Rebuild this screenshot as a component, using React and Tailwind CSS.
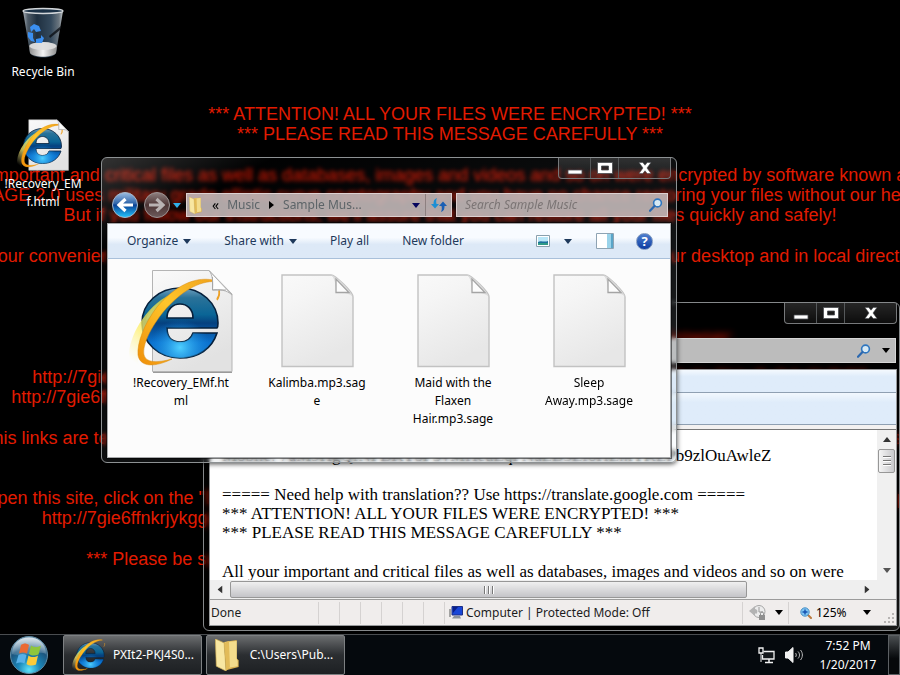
import React, { useId } from 'react';
import clsx from 'clsx';

const wallpaperText = [
    {
        gap: 'mt-0',
        lines: [
            '*** ATTENTION! ALL YOUR FILES WERE ENCRYPTED! ***',
            '*** PLEASE READ THIS MESSAGE CAREFULLY ***'
        ]
    },
    {
        gap: 'mt-[21px]',
        lines: [
            'All your important and critical files as well as databases, images and videos and so on were encrypted by software known as SAGE!',
            'SAGE 2.0 uses military grade elliptic curve cryptography and you have no chance restoring your files without our help!',
            "But if you follow our instructions, we'll assure that you can restore all your files quickly and safely!"
        ]
    },
    {
        gap: 'mt-[21px]',
        lines: ['For your convenience we have created files with instructions, they were also placed on your desktop and in local directories!']
    },
    {
        gap: 'mt-[61px]',
        lines: ['To get the instructions open any of this temporary links in your browser:']
    },
    {
        gap: 'mt-5',
        lines: [
            'http://7gie6ffnkrjykggd.rzunt3u2.com/login/AWmT8kzHq3vXbN0pR5sLcYd1eFgJ2uKo7iVwZxQ4a9hRtE5',
            'http://7gie6ffnkrjykggd.er29sl.com/login/AWmT8kzHq3vXbN0pR5sLcYd1eFgJ2uKo7iVwZxQ4a9hRtE3mPyB7t'
        ]
    },
    {
        gap: 'mt-[21px]',
        lines: ["This links are temporary and will stop working after a limited time, so if you can't open them, please use TOR Browser"]
    },
    {
        gap: 'mt-10',
        lines: [
            'To open this site, click on the "Download Tor" button on the page, run it again and then open the link of your personal page',
            'http://7gie6ffnkrjykggd.onion/login/AWmT8kzHq3vXbN0pR5sLcYd1eFgJ2uKo7iVwZxQ4a9hRtE3mPy7'
        ]
    },
    {
        gap: 'mt-[21px]',
        lines: ['*** Please be sure to copy this instruction text and links to your notepad, do not lose any ***']
    }
];

const files = [
    { id: 1, type: 'html', label: ['!Recovery_EMf.ht', 'ml'] },
    { id: 2, type: 'blank', label: ['Kalimba.mp3.sag', 'e'] },
    { id: 3, type: 'blank', label: ['Maid with the', 'Flaxen', 'Hair.mp3.sage'] },
    { id: 4, type: 'blank', label: ['Sleep', 'Away.mp3.sage'] }
];

function Caret({ className }) {
    return (
        <svg viewBox="0 0 8 5" className={clsx('h-[5px] w-2 shrink-0', className)} fill="currentColor">
            <path d="M0 0h8L4 5z" />
        </svg>
    );
}

function IeShape() {
    const id = useId();
    return (
        <>
            <defs>
                <linearGradient id={`${id}e`} x1="0" y1="0" x2="0" y2="1">
                    <stop offset="0" stopColor="#6f9fbd" />
                    <stop offset="0.14" stopColor="#2a7299" />
                    <stop offset="0.38" stopColor="#0a6596" />
                    <stop offset="0.5" stopColor="#05417f" />
                    <stop offset="0.78" stopColor="#0b72cf" />
                    <stop offset="1" stopColor="#1273c9" />
                </linearGradient>
                <radialGradient id={`${id}g`} cx="0.5" cy="0.85" r="0.4">
                    <stop offset="0" stopColor="#4fd0ff" />
                    <stop offset="1" stopColor="#1690e8" stopOpacity="0" />
                </radialGradient>
                <linearGradient id={`${id}r`} x1="1" y1="0" x2="0" y2="1">
                    <stop offset="0" stopColor="#f0a41c" />
                    <stop offset="0.45" stopColor="#ffc62b" />
                    <stop offset="1" stopColor="#ef8f0a" />
                </linearGradient>
                <linearGradient id={`${id}y`} x1="0.7" y1="0" x2="0.2" y2="1">
                    <stop offset="0" stopColor="#d4d23a" stopOpacity="0.8" />
                    <stop offset="0.6" stopColor="#fff06a" stopOpacity="0.75" />
                    <stop offset="1" stopColor="#fff6a0" stopOpacity="0" />
                </linearGradient>
            </defs>
            {['e', 'g'].map((fill) => (
                <path
                    key={fill}
                    d="M84 59H34C34 68 39 73 47 73C54 73 58 70 60 64H84C79 80 65 89 47 89C26 89 9 74 9 54C9 34 26 19 47 19C68 19 85 34 85 54C85 56 85 58 84 59ZM34 49H60C60 40 54 35 47 35C40 35 34 40 34 49Z"
                    fillRule="evenodd"
                    fill={`url(#${id}${fill})`}
                    stroke={fill === 'e' ? '#06203c' : 'none'}
                    strokeWidth="1.6"
                />
            ))}
            <path d="M40 26C24 32 14 42 13 52C18 47 24 40 32 36Z" fill="#cfe6f2" opacity="0.3" />
            <path d="M42 23C16 34-2 62-4 84C-4 94 0 98 6 96C2 84 12 56 30 36Z" fill={`url(#${id}y)`} />
            <path
                d="M80 11C60 7 40 19 24 38C11 55 4 74 5 86C7 99 23 98 39 90C24 94 13 94 11 86C9 76 18 58 31 42C45 26 62 13 80 12.500Z"
                fill={`url(#${id}r)`}
                stroke="#d98a10"
                strokeWidth="0.5"
            />
            <path d="M86 20C87 24 86 27 84 30" fill="none" stroke="#eda024" strokeWidth="1.500" />
        </>
    );
}

function HtmlFileIcon({ className }) {
    const id = useId();
    return (
        <svg viewBox="-4 0 104 104" className={className}>
            <defs>
                <linearGradient id={id} x1="0" y1="0" x2="0.4" y2="1">
                    <stop offset="0" stopColor="#fafafa" />
                    <stop offset="1" stopColor="#e2e2e2" />
                </linearGradient>
            </defs>
            <path d="M19.500 1.500H76L99 25V102.500H19.500Z" fill={`url(#${id})`} stroke="#b4b4b4" />
            <path d="M20 103.500H99" stroke="#9a9a9a" />
            <IeShape />
            <path d="M76 1.500C80 6 80 14 79.500 21C86 20 94 21 99 26Z" fill="#fdfdfd" stroke="#b0b0b0" />
            <path d="M79.500 8V21H93" fill="none" stroke="#a6a6a6" />
            <path d="M86 22C87 25 86 28 84 31" fill="none" stroke="#eda024" strokeWidth="1.500" />
        </svg>
    );
}

function BlankFileIcon({ className }) {
    const id = useId();
    return (
        <svg viewBox="0 0 73 94" className={className}>
            <defs>
                <linearGradient id={id} x1="0" y1="0" x2="0.400" y2="1">
                    <stop offset="0" stopColor="#f9f9f9" />
                    <stop offset="0.3" stopColor="#f5f5f5" />
                    <stop offset="1" stopColor="#e7e7e7" />
                </linearGradient>
            </defs>
            <path
                d="M1 1H50C54 1 72 18 72 23V92.500H1Z"
                fill={`url(#${id})`}
                stroke="#c2c2c2"
                strokeWidth="1.400"
            />
            <path d="M50 1C53 3 55 9 55 18.500C63 18 70 20 72 23C71 18 56 2 50 1Z" fill="#dcdcdc" />
            <path d="M55 5V18.500H68Z" fill="#fcfcfc" stroke="#a4a4a4" strokeWidth="1.300" />
        </svg>
    );
}

function FolderIcon({ className }) {
    return (
        <svg viewBox="0 0 24 33" className={className}>
            <path d="M9 3L22 1V20L24 22V29L12 32Z" fill="#d9b04e" />
            <path d="M10 3L22 2V20L23 23V28L12 30Z" fill="#f3dc8c" />
            <path d="M0 0L9 4L11 33L1 28Z" fill="#f8e7a2" />
            <path d="M9 4L14 2L15 29L11 33Z" fill="#e2bb58" />
            <path d="M0 0L9 4L11 33L1 28Z" fill="none" stroke="#d6b457" strokeWidth="0.7" />
        </svg>
    );
}

function RecycleBinIcon() {
    return (
        <svg viewBox="0 0 44 52" className="h-[52px] w-11">
            <defs>
                <linearGradient id="binBody" x1="0" x2="1">
                    <stop offset="0" stopColor="#a9b1b8" />
                    <stop offset="0.12" stopColor="#4d5a66" />
                    <stop offset="0.35" stopColor="#1f3040" />
                    <stop offset="0.7" stopColor="#34495c" />
                    <stop offset="0.9" stopColor="#6c7780" />
                    <stop offset="1" stopColor="#c4c9cc" />
                </linearGradient>
                <linearGradient id="binBase" x1="0" x2="1">
                    <stop offset="0" stopColor="#8c8c8c" />
                    <stop offset="0.5" stopColor="#f4f4f4" />
                    <stop offset="1" stopColor="#8c8c8c" />
                </linearGradient>
            </defs>
            <path d="M2 4L9 46C12 52 32 52 35 46L42 4Z" fill="url(#binBody)" />
            <path d="M8 39C12 34 31 34 36 39L35 46C31 51 13 51 9 46Z" fill="url(#binBase)" />
            <ellipse cx="22" cy="39" rx="13.500" ry="4" fill="#dedede" opacity="0.9" />
            <ellipse cx="22" cy="4" rx="20" ry="2.500" fill="#1b3146" stroke="#d3d7da" strokeWidth="1.300" />
            <path d="M40 19L28 29L29 31L39 23Z" fill="#0b0f14" opacity="0.8" />
            <g fill="#3b8ff0">
                <path d="M9 20L13 17L18 19L20 24L15 25L13 22L10 25Z" />
                <path d="M7 25L12 26L12 31L14 35L10 34L7 30Z" />
                <path d="M15 32L20 31V28L23 31L21 36L15 36Z" />
            </g>
        </svg>
    );
}

function StartOrb() {
    return (
        <svg viewBox="0 0 40 40" className="size-10">
            <defs>
                <radialGradient id="orb" cx="0.5" cy="0.9" r="0.85">
                    <stop offset="0" stopColor="#5fe4fb" />
                    <stop offset="0.35" stopColor="#1b87b9" />
                    <stop offset="0.7" stopColor="#1c567f" />
                    <stop offset="1" stopColor="#7fa3ba" />
                </radialGradient>
                <linearGradient id="orbShine" x1="0" y1="0" x2="0" y2="1">
                    <stop offset="0" stopColor="#fff" stopOpacity="0.7" />
                    <stop offset="1" stopColor="#fff" stopOpacity="0.12" />
                </linearGradient>
            </defs>
            <circle cx="20" cy="20" r="18.500" fill="url(#orb)" stroke="#5f8ba4" />
            <path d="M3 19C3 8 11 2.500 20 2.500S37 8 37 19C28 15 13 23 3 19Z" fill="url(#orbShine)" />
            <path d="M12 10C15 8 17 8 20 10L18 18.500C15 17 13 17 10 18.500Z" fill="#ea6a34" />
            <path d="M22 10.500C25 12.500 28 12.500 32 10.500L29.500 19.500C26 21 23 21 20 19Z" fill="#8fc63c" />
            <path d="M9.500 20C12 18.500 15 18.500 17.500 20L15.500 28.500C13 27 10 27 7 28.500Z" fill="#58b0e8" />
            <path d="M19.500 20.500C22 22.500 26 22.500 29 20.500L27 29.500C24 31 20 31 17.500 29Z" fill="#fccb3a" />
        </svg>
    );
}

function SearchIcon({ className }) {
    return (
        <svg viewBox="0 0 14 14" className={className} fill="none">
            <circle cx="8.500" cy="5" r="3.900" stroke="#2f76bf" strokeWidth="1.600" fill="#d7e9f4" />
            <path d="M5.500 8L1 12.800" stroke="#2b68b0" strokeWidth="2.200" strokeLinecap="round" />
        </svg>
    );
}

function CaptionButtons() {
    const base = 'flex h-5 items-center justify-center';
    return (
        <div className="flex shrink-0 divide-x divide-[#55585a] rounded-b-[4px] border border-t-0 border-[#77797b] bg-linear-to-b from-white/15 to-white/5">
            <button aria-label="Minimize" className={clsx(base, 'w-8')}>
                <svg viewBox="0 0 16 20" className="h-5 w-4">
                    <path d="M1 12h14v4H1z" fill="#fff" stroke="#4a4d50" strokeWidth="0.8" />
                </svg>
            </button>
            <button aria-label="Maximize" className={clsx(base, 'w-7')}>
                <svg viewBox="0 0 16 12" className="h-3 w-4">
                    <path d="M0.500 0.500h15v11h-15zM4.500 4h7v4h-7z" fillRule="evenodd" fill="#fff" stroke="#4a4d50" strokeWidth="0.8" />
                </svg>
            </button>
            <button aria-label="Close" className={clsx(base, 'w-[51px]')}>
                <svg viewBox="0 0 14 12" className="h-3 w-[14px]">
                    <path d="M1 0.500h3.800L7 3.200 9.200 0.500H13L9 6l4 5.500H9.200L7 8.800 4.800 11.500H1L5 6z" fill="#fff" stroke="#4a4d50" strokeWidth="0.600" />
                </svg>
            </button>
        </div>
    );
}

function ToolbarButton({ children, caret, className }) {
    return (
        <button className={clsx('flex items-center gap-[5px] whitespace-nowrap text-[#1e395b]', className)}>
            {children}
            {caret && <Caret />}
        </button>
    );
}

function ExplorerWindow() {
    return (
        <section
            aria-label="Sample Music"
            className="absolute top-[157px] left-[101px] flex h-[306px] w-[576px] flex-col rounded-md border border-[#8d9193] bg-linear-to-br from-white/20 via-[#0a1014]/10 via-15% to-sky-100/15 px-[5px] pb-1 shadow-[0_1px_5px_rgba(0,0,0,0.7)] backdrop-blur-[2px]"
        >
            <div className="flex justify-end">
                <CaptionButtons />
            </div>

            {/* Navigation row */}
            <div className="flex flex-1 items-center pt-2 pr-[3px] pl-1">
                <button aria-label="Back" className="shrink-0">
                    <svg viewBox="0 0 28 28" className="size-7">
                        <defs>
                            <linearGradient id="back" x1="0" y1="0" x2="0" y2="1">
                                <stop offset="0" stopColor="#9dbde2" />
                                <stop offset="0.45" stopColor="#2c62a8" />
                                <stop offset="0.5" stopColor="#093f94" />
                                <stop offset="1" stopColor="#24c6ff" />
                            </linearGradient>
                        </defs>
                        <circle cx="14" cy="14" r="12.500" fill="url(#back)" stroke="#a9b7c8" />
                        <path d="M22 14H9M14.500 8L8 14L14.500 20" fill="none" stroke="#fff" strokeWidth="3.200" />
                    </svg>
                </button>
                <button aria-label="Forward" className="ml-1 shrink-0">
                    <svg viewBox="0 0 28 28" className="size-7">
                        <defs>
                            <linearGradient id="forward" x1="0" y1="0" x2="0" y2="1">
                                <stop offset="0" stopColor="#8f8080" />
                                <stop offset="0.5" stopColor="#4d3535" />
                                <stop offset="1" stopColor="#6d5c5c" />
                            </linearGradient>
                        </defs>
                        <circle cx="14" cy="14" r="12.500" fill="url(#forward)" stroke="#9c9494" />
                        <path d="M6 14H19M13.500 8L20 14L13.500 20" fill="none" stroke="#b9b3b3" strokeWidth="3.200" />
                    </svg>
                </button>
                <button aria-label="Recent pages" className="ml-0.5 shrink-0 text-[#2fb0ea]">
                    <Caret />
                </button>
                <div className="ml-[5px] flex h-6 w-[266px] shrink-0 items-center border border-[#ddd0d0] bg-[#c3b9b9]/90 text-[#5d6468]">
                    <FolderIcon className="ml-0.5 h-[17px] w-[13px]" />
                    <button className="ml-[10px] text-sm leading-4 text-black">«</button>
                    <button className="ml-2">Music</button>
                    <svg viewBox="0 0 5 8" className="mx-[9px] h-2 w-[5px]">
                        <path d="M0 0L5 4L0 8z" />
                    </svg>
                    <button>Sample Mus...</button>
                    <button aria-label="Previous locations" className="ml-auto px-[5px] text-[#05055e]">
                        <Caret />
                    </button>
                    <button aria-label="Refresh" className="flex h-full w-[26px] items-center justify-center border-l border-[#8d8080]">
                        <svg viewBox="0 0 16 14" className="h-[14px] w-4" fill="#1d8fd4">
                            <path d="M6 0C3 1 2.500 3 2.500 6H0L4 10.500L8 6H5.500C5 4 5 2 6 0Z" />
                            <path d="M10 14C13 13 13.500 11 13.500 8H16L12 3.500L8 8H10.500C11 10 11 12 10 14Z" fill="#1a5fb4" />
                        </svg>
                    </button>
                </div>
                <div className="ml-1 flex h-6 min-w-0 flex-1 items-center border border-[#ddd0d0] bg-[#c3b9b9]/90 pr-1">
                    <input
                        aria-label="Search Sample Music"
                        placeholder="Search Sample Music"
                        className="min-w-0 flex-1 bg-transparent pl-2 text-[#6d6666] italic outline-none placeholder:text-[#7b7474]"
                    />
                    <SearchIcon className="size-[14px]" />
                </div>
            </div>

            <div className="flex h-[235px] flex-col border border-[#a7a9ab] bg-[#fcfcfc] outline outline-black/50">
                {/* Command bar */}
                <div className="flex h-[35px] shrink-0 items-center border-b border-[#a9c0da] bg-linear-to-b from-[#f8fbff] from-40% to-[#dde9f7] to-60% pr-[17px] pl-[19px]">
                    <ToolbarButton caret>Organize</ToolbarButton>
                    <ToolbarButton caret className="ml-[33px]">Share with</ToolbarButton>
                    <ToolbarButton className="ml-[33px]">Play all</ToolbarButton>
                    <ToolbarButton className="ml-[33px]">New folder</ToolbarButton>
                    <button aria-label="Change your view" className="ml-auto">
                        <svg viewBox="0 0 14 12" className="h-3 w-[14px]">
                            <path d="M0.500 0.500h13v11H0.500z" fill="#fff" stroke="#8aa0ad" />
                            <path d="M2 2h10v8H2z" fill="#b9e6f7" />
                            <path d="M2 7C5 5 8 7.500 12 6V8H2z" fill="#1d6f9b" />
                            <path d="M2 8h10v2H2z" fill="#2f9a86" />
                        </svg>
                    </button>
                    <button aria-label="More view options" className="ml-[14px] text-[#1e395b]">
                        <Caret />
                    </button>
                    <button aria-label="Preview pane" className="ml-6">
                        <svg viewBox="0 0 18 16" className="h-4 w-[18px]">
                            <path d="M0.500 0.500h17v15H0.500z" fill="#fff" stroke="#8ea3b3" />
                            <path d="M11 1h6v14h-6z" fill="#9ad3ea" />
                            <path d="M15 1h2v14h-2z" fill="#5aa5c8" />
                        </svg>
                    </button>
                    <button aria-label="Help" className="ml-[22px] flex size-[17px] items-center justify-center rounded-full border border-[#7f97bd] bg-linear-to-b from-[#4f7fce] to-[#0c3ba2] text-[13px] leading-none font-bold text-white">
                        ?
                    </button>
                </div>

                {/* Files */}
                <div className="grid grid-cols-4 pt-[10px] pr-[13px] pl-[5px] text-black">
                    {files.map((file) => (
                        <button key={file.id} className="flex flex-col items-center">
                            <span className="mb-px flex h-26 items-center">
                                {file.type === 'html' ? (
                                    <HtmlFileIcon className="size-26" />
                                ) : (
                                    <BlankFileIcon className="h-[94px] w-[73px]" />
                                )}
                            </span>
                            {file.label.map((line) => (
                                <span key={line} className="block leading-[18px]">{line}</span>
                            ))}
                        </button>
                    ))}
                </div>
            </div>
        </section>
    );
}

function BrowserWindow() {
    return (
        <section
            aria-label="Internet Explorer"
            className="absolute top-[302px] right-0 bottom-[3px] left-[203px] flex flex-col rounded-md border border-[#85888a] bg-linear-to-br from-black/20 via-black/20 via-80% to-white/10 pr-0.5 pb-1 pl-[5px] backdrop-blur-[3px]"
        >
            <div className="flex justify-end">
                <CaptionButtons />
            </div>
            <div className="mt-[14px] mr-px ml-14 flex h-[25px] items-center justify-end gap-[11px] border border-[#d6d6d6] bg-[#bcbcbc] pr-[5px] text-black">
                <SearchIcon className="size-[14px]" />
                <button aria-label="Search options"><Caret /></button>
            </div>

            <div className="mt-[6px] flex min-h-0 flex-1 flex-col border border-[#97999b] bg-white">
                <div className="h-[23px] shrink-0 border-b border-[#8fa0b2] bg-linear-to-b from-[#f4f9fe] to-[#dfecfa] to-30%" />
                <div className="h-[32px] shrink-0 border-b border-[#8fa0b2] bg-linear-to-b from-[#f2f8fe] to-[#dfecfa] to-30%" />
                <div className="h-[5px] shrink-0 border-b border-[#777] bg-[#f3f1f0]" />
                <div className="flex min-h-0 flex-1">
                    {/* Document */}
                    <article className="flex min-w-0 flex-1 flex-col gap-5 overflow-hidden pt-4 pl-3 font-['Liberation_Serif','Times_New_Roman',serif] text-[17px] leading-[19px] whitespace-nowrap text-black">
                        <p>Mobile: 7aM9HgQfNFBKT8FSvMHeuEqFNaLB3EfoHEnfTKLPb9zlOuAwleZ</p>
                        <p>
                            ===== Need help with translation?? Use https://translate.google.com =====<br />
                            *** ATTENTION! ALL YOUR FILES WERE ENCRYPTED! ***<br />
                            *** PLEASE READ THIS MESSAGE CAREFULLY ***
                        </p>
                        <p>All your important and critical files as well as databases, images and videos and so on were</p>
                    </article>
                    {/* Vertical scroll bar */}
                    <div className="flex w-[19px] shrink-0 flex-col items-center bg-[#f0f0f0]">
                        <button aria-label="Scroll up" className="flex h-[19px] items-center text-[#333]">
                            <Caret className="rotate-180" />
                        </button>
                        <div className="flex h-6 w-[17px] flex-col items-center justify-center gap-0.5 rounded-xs border border-[#979797] bg-linear-to-r from-[#f5f5f5] to-[#c9c9cc]">
                            <span className="h-0.5 w-2 border-b border-white bg-[#777]" />
                            <span className="h-0.5 w-2 border-b border-white bg-[#777]" />
                            <span className="h-0.5 w-2 border-b border-white bg-[#777]" />
                        </div>
                        <button aria-label="Scroll down" className="mt-auto flex h-[19px] items-center text-[#555]">
                            <Caret />
                        </button>
                    </div>
                </div>
                {/* Horizontal scroll bar */}
                <div className="flex h-5 shrink-0 items-center border-b border-[#9b9b9b] bg-[#efefef] pr-[19px] text-[#333]">
                    <button aria-label="Scroll left" className="flex w-5 justify-center">
                        <Caret className="rotate-90" />
                    </button>
                    <div className="flex h-[17px] w-[517px] items-center justify-center gap-0.5 rounded-xs border border-[#979797] bg-linear-to-b from-[#f0f0f0] to-[#c4c4c8]">
                        <span className="h-2 w-0.5 border-r border-white bg-[#777]" />
                        <span className="h-2 w-0.5 border-r border-white bg-[#777]" />
                        <span className="h-2 w-0.5 border-r border-white bg-[#777]" />
                    </div>
                    <button aria-label="Scroll right" className="ml-auto flex w-5 justify-center">
                        <Caret className="-rotate-90" />
                    </button>
                </div>
                {/* Status bar */}
                <footer className="flex h-[25px] shrink-0 items-center bg-[#f0edec] text-[#1c1c1c]">
                    <span className="w-[108px] pl-px">Done</span>
                    {[1, 2, 3, 4, 5, 6].map((pane) => (
                        <span key={pane} className="h-[22px] w-[21px] border-l border-[#d5d2d1]" />
                    ))}
                    <span className="flex h-[22px] items-center gap-[3px] border-l border-[#d5d2d1] pl-1">
                        <svg viewBox="0 0 14 13" className="h-[13px] w-[14px]">
                            <path d="M3 0.500H13.500V9H3z" fill="#1846d8" stroke="#1c2f86" />
                            <path d="M4 1L9 1L4 7z" fill="#0a1f8a" />
                            <path d="M1 3v8" stroke="#8a8a8a" strokeWidth="1.500" />
                            <path d="M5 10h6l1 2.500H3z" fill="#8b939c" />
                        </svg>
                        Computer | Protected Mode: Off
                    </span>
                    <button aria-label="Privacy report" className="ml-auto flex h-[22px] w-[46px] items-center justify-center gap-2 border-l border-[#d5d2d1] text-black">
                        <svg viewBox="0 0 18 17" className="h-[17px] w-[18px]">
                            <circle cx="10" cy="7.500" r="6" fill="#ececec" stroke="#a5a5a5" />
                            <path d="M10 3v5h4" fill="none" stroke="#9a9a9a" />
                            <path d="M0 7L6 2V5C9 5 9 9 7 10L6 9V12Z" fill="#b3b3b3" />
                            <path d="M10 11h6v5h-6z" fill="#8f8f8f" />
                            <path d="M11.500 11V9.500a1.500 1.500 0 013 0V11" fill="none" stroke="#8f8f8f" />
                        </svg>
                        <Caret />
                    </button>
                    <button className="flex h-[22px] w-[88px] items-center gap-1 border-l border-[#d5d2d1] pl-[11px] text-black">
                        <svg viewBox="0 0 12 12" className="size-3">
                            <path d="M8 8L11 11" stroke="#b9793d" strokeWidth="2" strokeLinecap="round" />
                            <circle cx="5" cy="5" r="4.200" fill="#7fc4f2" stroke="#4a8fc4" />
                            <path d="M5 2.500v5M2.500 5h5" stroke="#1450b0" strokeWidth="1.400" />
                        </svg>
                        125%
                        <Caret className="ml-3" />
                    </button>
                    <svg viewBox="0 0 12 12" className="mt-auto ml-2 size-3" fill="#b7b4b3">
                        <path d="M8 0h2v2H8zM8 4h2v2H8zM8 8h2v2H8zM4 4h2v2H4zM4 8h2v2H4zM0 8h2v2H0z" />
                    </svg>
                </footer>
            </div>
        </section>
    );
}

function TaskButton({ children, label }) {
    return (
        <button className="flex h-full w-[139px] items-center rounded-xs border border-[#7d8082] bg-linear-to-b from-[#6b6d6f] via-[#2b2e31] via-50% to-[#1d2023] pl-2 text-white">
            {children}
            <span className="flex-1 text-center whitespace-nowrap">{label}</span>
        </button>
    );
}

function Taskbar() {
    return (
        <nav className="flex h-[41px] shrink-0 items-center border-t border-[#4a4d50] bg-[#05090d] pl-[9px]">
            <button aria-label="Start" className="shrink-0">
                <StartOrb />
            </button>
            <div className="ml-[14px] flex h-full gap-1">
                <TaskButton label="PXIt2-PKJ4S0...">
                    <svg viewBox="-4 6 94 94" className="size-[34px] shrink-0">
                        <IeShape />
                    </svg>
                </TaskButton>
                <TaskButton label="C:\Users\Pub...">
                    <FolderIcon className="h-8 w-6 shrink-0" />
                </TaskButton>
            </div>
            <div className="ml-auto flex h-full items-center text-white">
                <svg viewBox="0 0 17 17" className="size-[17px]" fill="none" stroke="#f1f1f1">
                    <path d="M5.500 4.500H16V12H4.500V8" fill="#15191c" strokeWidth="1.300" />
                    <path d="M7 15.500h8M11 12v3" strokeWidth="1.500" />
                    <path d="M1 1h4v5H1z" strokeWidth="1.300" />
                    <path d="M3 6v9" />
                </svg>
                <svg viewBox="0 0 18 16" className="ml-[10px] h-4 w-[18px]" fill="none" stroke="#f1f1f1">
                    <path d="M0.500 5H3L8 0.500V15.500L3 11H0.500Z" fill="#f1f1f1" />
                    <path d="M10.500 6C11.500 7 11.500 9 10.500 10M13 4.500C15 6.500 15 9.500 13 11.500M15.500 3C18 6 18 10 15.500 13" stroke="#bdbdbd" />
                </svg>
                <div className="ml-[14px] w-[62px] text-center leading-[19px]">
                    <div>7:52 PM</div>
                    <div>1/20/2017</div>
                </div>
                <button aria-label="Show desktop" className="ml-[9px] h-full w-3 border border-[#5c6063] bg-linear-to-b from-[#4b4f52] to-[#07090b] to-60%" />
            </div>
        </nav>
    );
}

export default function App() {
    return (
        <div className="flex h-screen min-h-[560px] flex-col overflow-hidden bg-black font-['Noto_Sans','Open_Sans',sans-serif] text-[12px] leading-[18px]">
            <main className="relative min-h-0 flex-1 overflow-hidden">
                {/* Wallpaper message */}
                <div className="flex flex-col items-center pt-[104px] font-['Liberation_Sans',Arial,sans-serif] text-[18px] leading-5 whitespace-nowrap text-[#e21b00]">
                    {wallpaperText.map(({ gap, lines }) => (
                        <div key={lines[0]} className={clsx('flex flex-col items-center', gap)}>
                            {lines.map((line) => <p key={line}>{line}</p>)}
                        </div>
                    ))}
                </div>

                {/* Desktop icons */}
                <div className="absolute top-[7px] left-0 flex w-[86px] flex-col items-center gap-[38px] text-white">
                    <button className="flex flex-col items-center gap-1 whitespace-nowrap [text-shadow:0_1px_2px_#000]">
                        <RecycleBinIcon />
                        Recycle Bin
                    </button>
                    <button className="flex flex-col items-center [text-shadow:0_1px_2px_#000]">
                        <HtmlFileIcon className="size-[52px]" />
                        <span className="mt-1">!Recovery_EM</span>
                        <span>f.html</span>
                    </button>
                </div>

                <BrowserWindow />
                <ExplorerWindow />
            </main>
            <Taskbar />
        </div>
    );
}
